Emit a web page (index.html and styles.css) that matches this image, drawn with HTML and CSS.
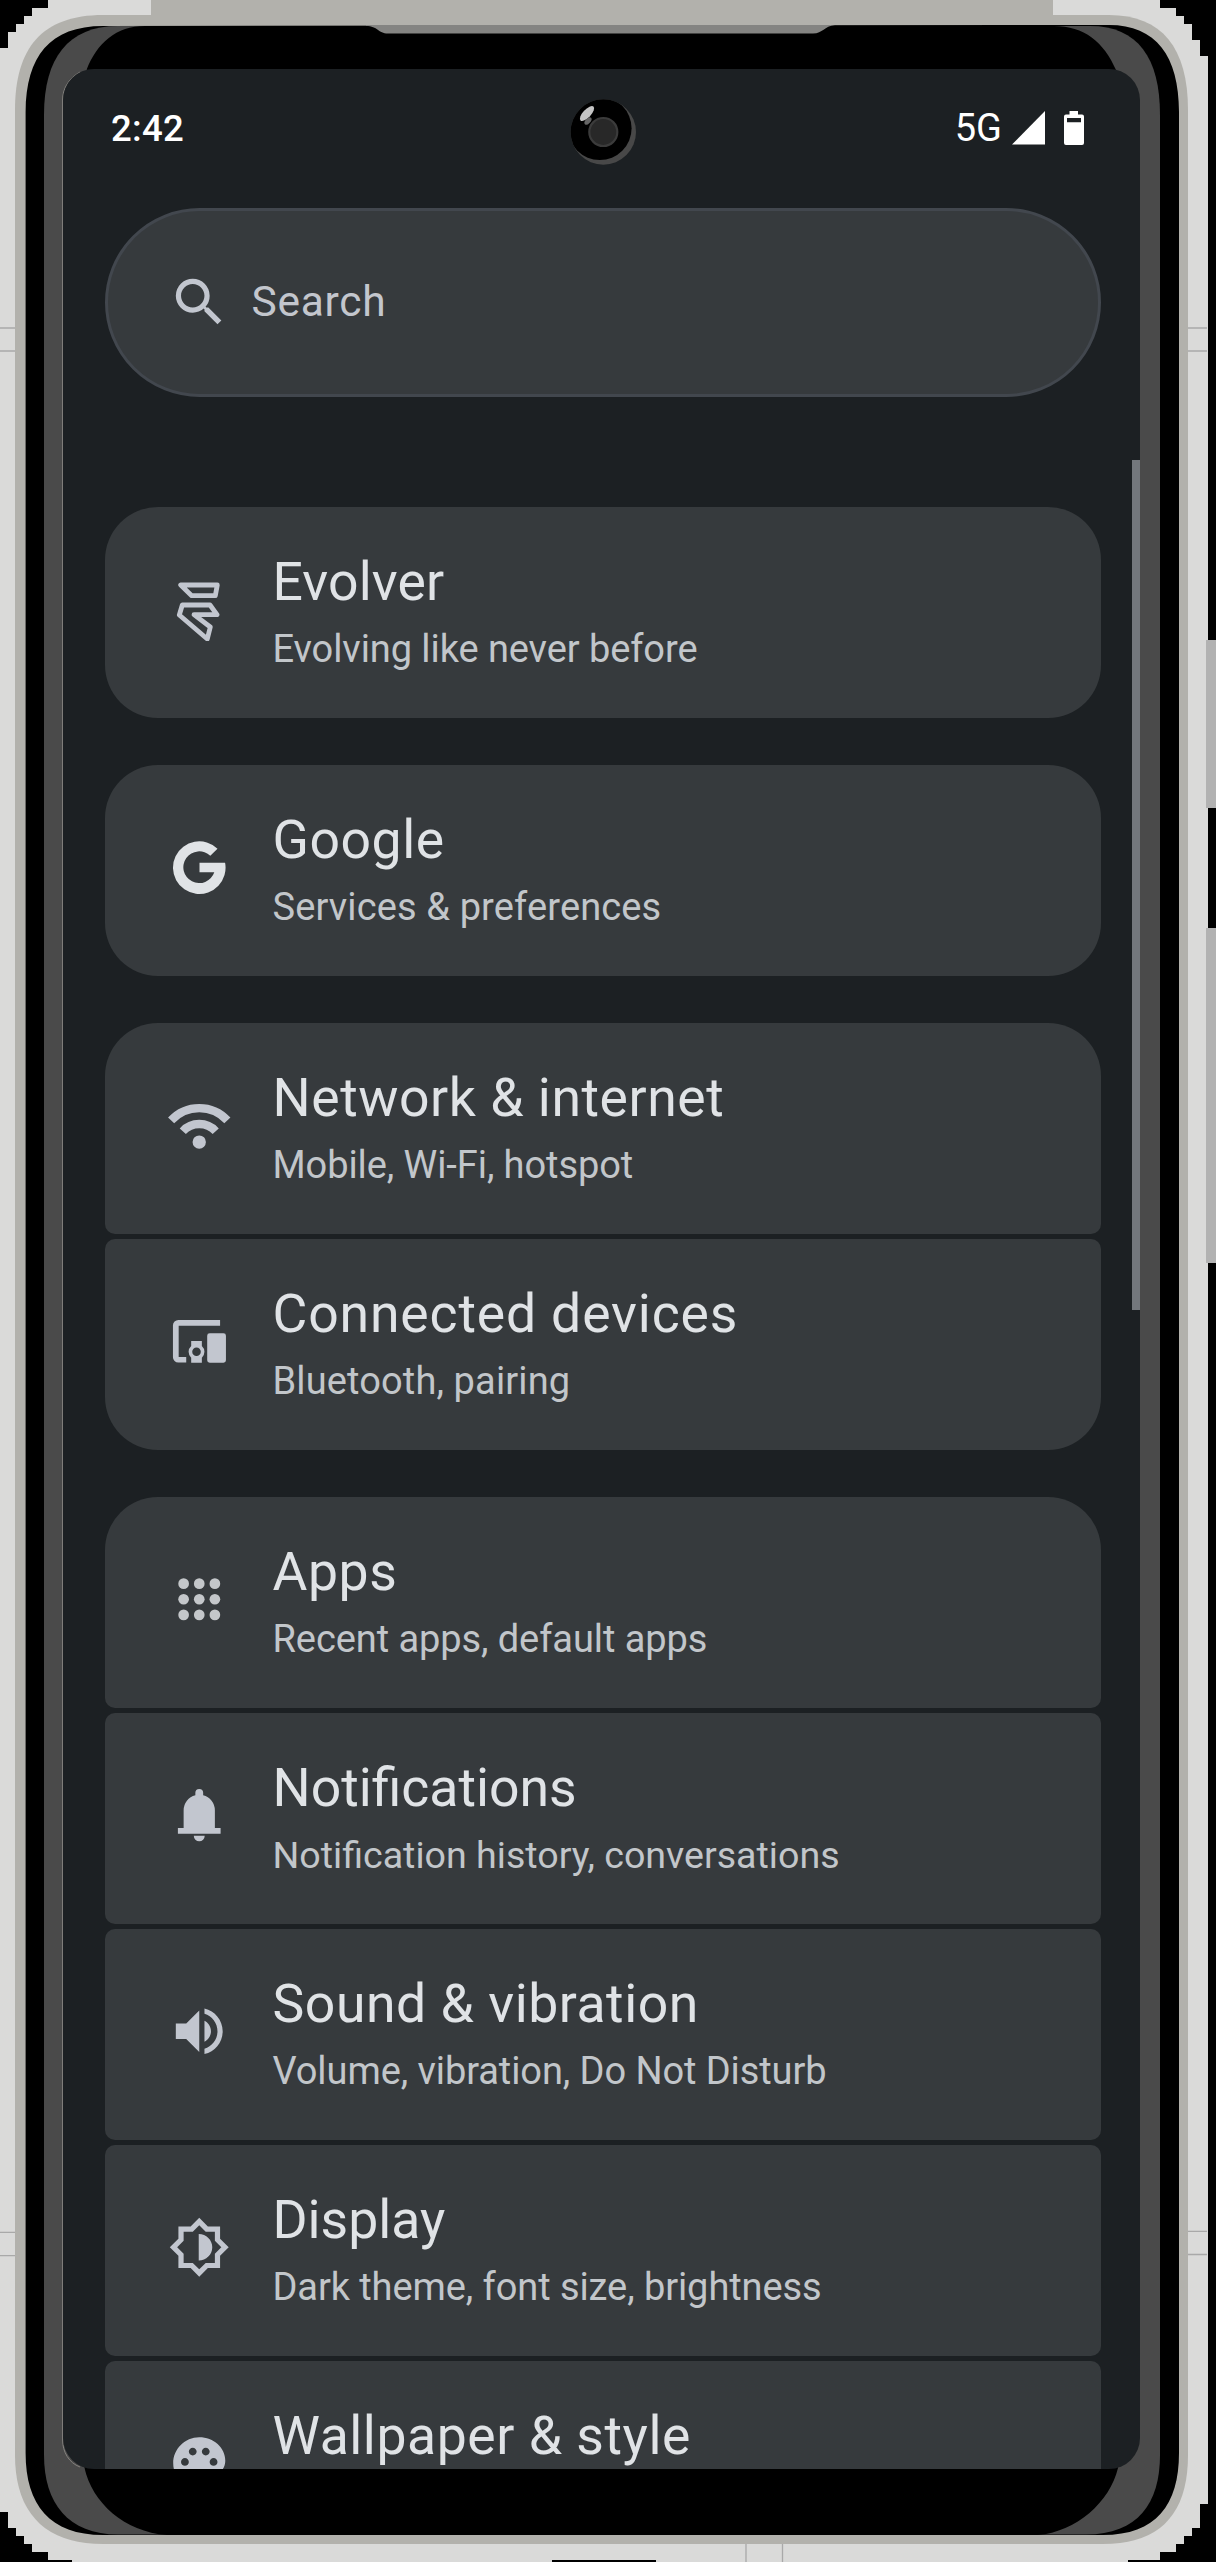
FILE: index.html
```html
<!DOCTYPE html>
<html lang="en">
<head>
<meta charset="utf-8">
<title>Settings</title>
<link rel="stylesheet" href="styles.css">
</head>
<body>
<div class="phone">
  <svg class="frame" viewBox="0 0 1216 2562" aria-hidden="true">
    <path fill="#dadad9" d="M48 0H1160V8H1176V16H1184V24H1192V40H1200V56H1208V2504H1200V2528H1192V2536H1184V2544H1176V2552H1160V2560H1128V2562H656V2560H552V2562H72V2560H48V2552H32V2544H24V2536H16V2528H8V2512H0V48H8V32H16V24H24V16H32V8H48z"/>
    <path fill="#b2b1ac" d="M151 0H1053V40H151z"/>
    <path fill="#b2b2b2" d="M1206 640H1216V808H1206zM1206 928H1216V1263H1206z"/>
    <path fill="none" stroke="#a9a9a9" stroke-width="1.3" d="M0 328H15M0 351H15M1188 328H1207M1188 351H1207M0 2232.3H15M0 2255.7H15M1188 2231.300H1207M1188 2254.500H1207M746 2544V2562M782.5 2544V2562"/>
    <path fill="#b2b1ac" d="M15 110C15 48 42 15 103 15H1109C1162 15 1188 48 1188 110V2455C1188 2512 1162 2544 1103 2544H103C44 2544 15 2512 15 2455z"/>
    <path fill="#000" d="M25.6 112C26 56 50 26 103 26L1109 25C1156 25 1179 56 1179 112V2453C1179 2505 1156 2535 1103 2535H103C50 2535 25.6 2505 25.6 2453z"/>
    <path fill="#4a4a4a" d="M44 115C44 58 68 26 118 26H1090C1138 26 1160 58 1160 115V2455C1160 2503 1138 2534.5 1086 2534.5H118C68 2534.5 44 2503 44 2455z"/>
    <path fill="#000" d="M145 26H1054C1084 26 1104 42 1116 70L1140 80V2458L1118 2468C1110 2502 1076 2532 1038 2535H167C124 2532 92 2502 84.5 2468L63 2458V80L86.5 70C97 43 116 26 145 26z"/>
    <path fill="#4a4a4a" d="M62 69.500H87V112H62zM1116 69.500H1141V110H1116zM62 2430H84.500V2468.500H62zM1118 2430H1141V2468.500H1118z"/>
    <path fill="#848482" d="M366 25H835C824 26 823 33.500 813 33.500H388C378 33.500 378 26 366 26z"/>
    <path fill="none" stroke="#85837f" stroke-width="1" d="M80 72C68 79 62.600 89 62.600 100V2440C62.600 2452 69 2463 80 2467"/>
  </svg>

  <main class="screen">
    <header class="status">
      <span class="clock">2:42</span>
      <div class="status-right">
        <span class="net">5G</span>
        <svg class="signal" viewBox="0 0 33 34"><path fill="#fff" d="M0 33.500L33 0V33.500z"/></svg>
        <svg class="battery" viewBox="0 0 20 34"><path fill="#fff" fill-rule="evenodd" d="M5.500 0H14V3.500H18A2 2 0 0 1 20 5.500V32A2 2 0 0 1 18 34H2A2 2 0 0 1 0 32V5.500A2 2 0 0 1 2 3.500H5.500zM3 7V11.300H17V7z"/></svg>
      </div>
      <svg class="camera" viewBox="0 0 66 68">
        <defs><clipPath id="bezel"><circle cx="33.300" cy="34" r="32.700"/></clipPath></defs>
        <circle cx="33.300" cy="34" r="32.700" fill="#484848"/>
        <circle cx="29.800" cy="30.300" r="31.800" fill="#000" clip-path="url(#bezel)"/>
        <circle cx="33.300" cy="34" r="14" fill="#282828" stroke="#3b3b3b" stroke-width="2.200"/>
        <ellipse cx="17" cy="15.500" rx="9.500" ry="4" fill="#c5c5c5" transform="rotate(-47 17 15.500)"/>
        <ellipse cx="18" cy="23" rx="4.500" ry="2.400" fill="#666" transform="rotate(-47 18 23)"/>
      </svg>
    </header>

    <div class="search">
      <svg class="icon" viewBox="0 0 24 24"><path d="M15.500 14h-.79l-.28-.27A6.471 6.471 0 0 0 16 9.500 6.500 6.500 0 1 0 9.500 16c1.610 0 3.090-.59 4.230-1.570l.27.28v.79l5 4.990L20.490 19l-4.990-5zm-6 0C7.010 14 5 11.990 5 9.500S7.010 5 9.500 5 14 7.010 14 9.500 11.990 14 9.500 14z"/></svg>
      <span class="hint">Search</span>
    </div>

    <section class="group">
      <div class="row">
        <svg class="icon" viewBox="0 0 62.500 62.500"><path class="outline" d="M12.700 7H49.300L47.300 17.700H23.700zM14.300 27H42L49 36.700H26L42.300 49L39.300 61L11.300 37z"/></svg>
        <div class="text"><div class="title track-s">Evolver</div><div class="sub tight">Evolving like never before</div></div>
      </div>
    </section>

    <section class="group">
      <div class="row">
        <svg class="icon bright" viewBox="0 0 62.500 62.500"><path d="M49.500 12.700A26.300 26.300 0 1 0 57.100 26.700H31.500V36.300H46.300A15.900 15.900 0 1 1 42.300 19.800z"/></svg>
        <div class="text"><div class="title track-m">Google</div><div class="sub track-s">Services &amp; preferences</div></div>
      </div>
    </section>

    <section class="group">
      <div class="row">
        <svg class="icon" viewBox="0 0 24 24"><g class="arcs"><path d="M1.200 10.150A14.700 14.700 0 0 1 22.800 10.150M5.680 14.300A8.600 8.600 0 0 1 18.320 14.300"/></g><circle cx="12" cy="18.450" r="2.560"/></svg>
        <div class="text"><div class="title track-m">Network &amp; internet</div><div class="sub tight">Mobile, Wi-Fi, hotspot</div></div>
      </div>
      <div class="row">
        <svg class="icon" viewBox="0 0 24 24"><path fill-rule="evenodd" d="M20 3.800H4a2.100 2.100 0 0 0-2.100 2.100v12.200a2.100 2.100 0 0 0 2.100 2.100h3v-2.200H4.100V6H20zM16 8.900h5.300a.95.95 0 0 1 .95.95v9.450a.95.95 0 0 1-.95.95H16a.95.95 0 0 1-.95-.95V9.850A.95.95 0 0 1 16 8.900zM8.900 11.900H13V13.800A3.050 3.050 0 0 1 13 18.300V20.250H8.900V18.300A3.050 3.050 0 0 1 8.900 13.800zM10.950 14.400a1.650 1.650 0 1 0 0 3.300a1.650 1.650 0 1 0 0-3.300z"/></svg>
        <div class="text"><div class="title track-l">Connected devices</div><div class="sub track-s">Bluetooth, pairing</div></div>
      </div>
    </section>

    <section class="group">
      <div class="row">
        <svg class="icon neutral" viewBox="0 0 24 24"><circle cx="6" cy="6" r="2.050"/><circle cx="12" cy="6" r="2.050"/><circle cx="18" cy="6" r="2.050"/><circle cx="6" cy="12" r="2.050"/><circle cx="12" cy="12" r="2.050"/><circle cx="18" cy="12" r="2.050"/><circle cx="6" cy="18" r="2.050"/><circle cx="12" cy="18" r="2.050"/><circle cx="18" cy="18" r="2.050"/></svg>
        <div class="text"><div class="title track-m">Apps</div><div class="sub tight">Recent apps, default apps</div></div>
      </div>
      <div class="row">
        <svg class="icon" viewBox="0 0 24 24"><path d="M3.800 19.100v-2.200H6V10.100a6 6 0 0 1 4.500-5.800V3.400a1.500 1.500 0 0 1 3 0v.9A6 6 0 0 1 18 10.100v6.800h2.200v2.200zM12 22a2.100 2.100 0 0 0 2.100-2.100H9.900A2.100 2.100 0 0 0 12 22z"/></svg>
        <div class="text"><div class="title">Notifications</div><div class="sub small">Notification history, conversations</div></div>
      </div>
      <div class="row">
        <svg class="icon" viewBox="0 0 24 24"><path d="M3 9v6h4l5 5V4L7 9H3zm13.500 3c0-1.770-1.020-3.290-2.500-4.030v8.050c1.480-.73 2.500-2.250 2.500-4.020zM14 3.230v2.060c2.890.86 5 3.540 5 6.710s-2.110 5.850-5 6.710v2.060c4.010-.91 7-4.490 7-8.770s-2.990-7.860-7-8.770z"/></svg>
        <div class="text"><div class="title track-m">Sound &amp; vibration</div><div class="sub tight">Volume, vibration, Do Not Disturb</div></div>
      </div>
      <div class="row">
        <svg class="icon" viewBox="0 0 24 24"><path fill-rule="evenodd" d="M20 8.690V4h-4.690L12 .69 8.690 4H4v4.690L.69 12 4 15.310V20h4.690L12 23.310 15.310 20H20v-4.690L23.310 12 20 8.690zM18 14.480V18h-3.520L12 20.480 9.520 18H6v-3.520L3.520 12 6 9.520V6h3.520L12 3.520 14.480 6H18v3.520L20.480 12 18 14.480zM11.800 6.900v10.200c2.900 0 5.200-2.300 5.200-5.100S14.700 6.900 11.800 6.900z"/></svg>
        <div class="text"><div class="title">Display</div><div class="sub tight">Dark theme, font size, brightness</div></div>
      </div>
      <div class="row">
        <svg class="icon" viewBox="0 0 24 24"><path fill-rule="evenodd" d="M12 2C6.490 2 2 6.490 2 12s4.490 10 10 10c1.380 0 2.500-1.120 2.500-2.500 0-.61-.23-1.200-.64-1.670-.08-.1-.13-.21-.13-.33 0-.28.22-.5.5-.5H16c3.310 0 6-2.690 6-6C22 6.040 17.510 2 12 2zM17.500 13c-.83 0-1.500-.67-1.500-1.500s.67-1.500 1.500-1.500 1.500.67 1.500 1.500-.67 1.500-1.500 1.500zM14.500 9c-.83 0-1.500-.67-1.500-1.500S13.670 6 14.500 6 16 6.670 16 7.500 15.330 9 14.500 9zM5 11.500c0-.83.67-1.500 1.500-1.500S8 10.670 8 11.500 7.330 13 6.500 13 5 12.330 5 11.500zM11 7.500C11 8.330 10.330 9 9.500 9S8 8.330 8 7.500 8.670 6 9.500 6 11 6.670 11 7.500z"/></svg>
        <div class="text"><div class="title track-m">Wallpaper &amp; style</div></div>
      </div>
    </section>
    <div class="scrollbar"></div>
  </main>
</div>
</body>
</html>
```
FILE: styles.css
```css
* { box-sizing: border-box; }

body {
  margin: 0;
  background: #000;
  font-family: Roboto, "Liberation Sans", sans-serif;
}

.phone {
  display: grid;
  width: 1216px;
  height: 2562px;
  overflow: hidden;
}

.frame,
.screen { grid-area: 1 / 1; }

.frame {
  width: 1216px;
  height: 2562px;
}

.screen {
  position: relative;
  width: 1077px;
  height: 2400px;
  margin: 69px 0 0 63px;
  padding: 0 39px 0 42px;
  border-radius: 31px;
  background: #1c2023;
  overflow: hidden;
}

.status {
  display: flex;
  justify-content: space-between;
  height: 139px;
  padding: 36px 17px 0 6px;
  color: #fff;
}

.clock {
  padding-top: 1px;
  font-size: 36.500px;
  font-weight: 500;
  line-height: 46px;
  letter-spacing: 0.300px;
}

.status-right {
  display: flex;
  align-items: flex-start;
}

.net {
  margin-right: 10px;
  font-size: 38px;
  line-height: 46px;
}

.signal {
  width: 33px;
  height: 34px;
  margin: 6px 19px 0 0;
}

.battery {
  width: 20px;
  height: 34px;
  margin-top: 6px;
}

.camera {
  position: absolute;
  left: 507px;
  top: 29px;
  width: 66px;
  height: 68px;
}

.search {
  display: flex;
  align-items: center;
  height: 189px;
  margin-bottom: 110px;
  padding-left: 60px;
  border: 3px solid #42474e;
  border-radius: 95px;
  background: #363a3d;
}

.hint {
  margin-left: 21px;
  padding-bottom: 2px;
  color: #c3c6cd;
  font-size: 42.500px;
  letter-spacing: 0.700px;
}

.icon {
  flex: none;
  width: 62.500px;
  height: 62.500px;
  fill: #c2c6cf;
}

.bright { fill: #e0e3e6; }
.neutral { fill: #c4c7ca; }

.outline {
  fill: none;
  stroke: #c2c6cf;
  stroke-width: 4.800;
  stroke-linejoin: round;
}

.arcs {
  fill: none;
  stroke: #c2c6cf;
  stroke-width: 3.200;
}

.group {
  display: flex;
  flex-direction: column;
  gap: 5px;
  margin-bottom: 47px;
}

.row {
  display: flex;
  height: 211px;
  padding: 71px 0 0 63px;
  border-radius: 10px;
  background: #363a3d;
}

.row:first-child {
  border-top-left-radius: 53px;
  border-top-right-radius: 53px;
}

.row:last-child {
  border-bottom-left-radius: 53px;
  border-bottom-right-radius: 53px;
}

.text {
  margin: -27px 0 0 42px;
  white-space: nowrap;
}

.title {
  color: #e0e3e6;
  font-size: 53.500px;
  line-height: 62px;
}

.sub {
  margin-top: 13px;
  color: #c2c6ca;
  font-size: 38px;
  line-height: 46px;
}

.small { font-size: 37.600px; }
.tight { letter-spacing: -0.080px; }
.track-s { letter-spacing: 0.130px; }
.track-m { letter-spacing: 0.550px; }
.track-l { letter-spacing: 0.850px; }

.scrollbar {
  position: absolute;
  right: 0;
  top: 391px;
  width: 8px;
  height: 850px;
  background: #73777c;
}
```
